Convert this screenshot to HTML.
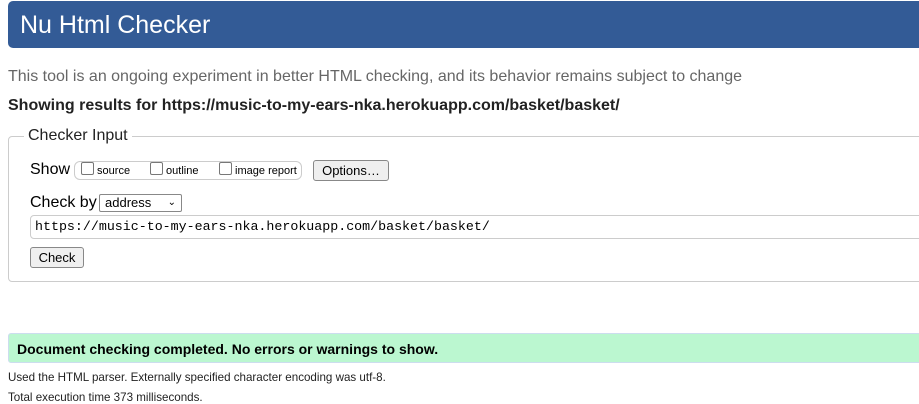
<!DOCTYPE html>
<html><head><style>
body{margin:0;width:919px;height:403px;overflow:hidden;background:#fff;font-family:"Liberation Sans",Arial,sans-serif;position:relative;color:#000}
.a{position:absolute;white-space:nowrap}
#hd{left:8px;top:1px;width:930px;height:47px;background:#335b96;border-radius:5px}
#hd span{position:absolute;left:12px;top:10px;color:#fff;font-size:25px}
#fs{left:8px;top:136px;width:930px;height:146px;border:1px solid #ccc;border-radius:4px;box-sizing:border-box}
.cb{display:inline-block;width:11px;height:11px;border:1px solid #777;border-radius:2px;vertical-align:-1px;background:#fff}
.btn{border:1px solid #888;background:#efefef;border-radius:3px;box-sizing:border-box;font-size:13px;text-align:center}
</style></head><body>
<div class="a" id="hd"><span>Nu Html Checker</span></div>
<div class="a" style="left:8px;top:68px;font-size:16px;color:#666">This tool is an ongoing experiment in better HTML checking, and its behavior remains subject to change</div>
<div class="a" style="left:8px;top:97px;font-size:16px;font-weight:bold;color:#222">Showing results for https://music-to-my-ears-nka.herokuapp.com/basket/basket/</div>
<div class="a" id="fs"></div>
<div class="a" style="left:24px;top:127px;background:#fff;padding:0 4px;font-size:16px;color:#222">Checker Input</div>
<div class="a" style="left:30px;top:161px;font-size:16px">Show</div>
<div class="a" style="left:74px;top:161px;width:228px;height:19px;border:1px solid #ccc;border-radius:6px;box-sizing:border-box"></div>
<div class="a" style="left:81px;top:162px;font-size:11px"><span class="cb"></span> source</div>
<div class="a" style="left:150px;top:162px;font-size:11px"><span class="cb"></span> outline</div>
<div class="a" style="left:219px;top:162px;font-size:11px"><span class="cb"></span> image report</div>
<div class="a btn" style="left:313px;top:160px;width:76px;height:21px;line-height:19px">Options…</div>
<div class="a" style="left:30px;top:194px;font-size:16px">Check by</div>
<div class="a" style="left:99px;top:194px;width:83px;height:18px;border:1px solid #888;border-radius:2px;box-sizing:border-box;font-size:13px;padding-left:5px;line-height:16px">address<span style="position:absolute;right:5px;top:0;font-size:10px">&#8964;</span></div>
<div class="a" style="left:30px;top:215px;width:900px;height:24px;border:1px solid #ccc;border-radius:4px;box-sizing:border-box;font-family:'Liberation Mono',monospace;font-size:13.3px;line-height:22px;padding-left:4px">https://music-to-my-ears-nka.herokuapp.com/basket/basket/</div>
<div class="a btn" style="left:30px;top:247px;width:54px;height:21px;line-height:19px">Check</div>
<div class="a" style="left:8px;top:333px;width:930px;height:30px;background:#bbf7d0;border:1px solid #cde;border-radius:3px;box-sizing:border-box"></div>
<div class="a" style="left:17px;top:341px;font-size:14px;font-weight:bold">Document checking completed. No errors or warnings to show.</div>
<div class="a" style="left:8px;top:371px;font-size:11.6px;color:#222">Used the HTML parser. Externally specified character encoding was utf-8.</div>
<div class="a" style="left:8px;top:391px;font-size:11.6px;color:#222">Total execution time 373 milliseconds.</div>
</body></html>
